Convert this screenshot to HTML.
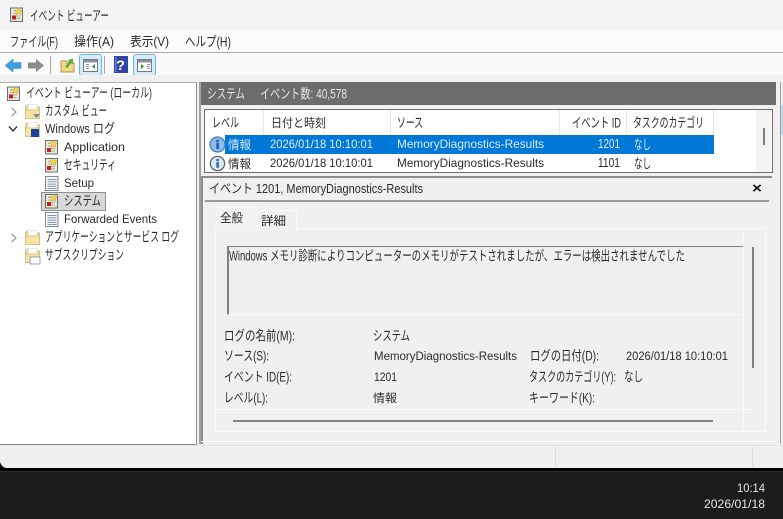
<!DOCTYPE html>
<html><head><meta charset="utf-8"><style>
html,body{margin:0;padding:0;overflow:hidden;width:783px;height:519px}
body{position:relative;background:#f0f0f0;font-family:"Liberation Sans","Noto Sans CJK JP",sans-serif;font-size:12px;color:#222}
.a{position:absolute}
svg{position:absolute}
#txt{left:0;top:0;overflow:hidden}
#txt text{font-family:"Liberation Sans","Noto Sans CJK JP",sans-serif;font-size:12px;fill:#2a2a2a;white-space:pre}
#txt .j{font-size:13.5px;transform:translateY(.5px)}
#txt .m{font-size:13px}
#txt .w{fill:#dcebfa}
#txt .s{font-size:11.5px}
#txt .h{fill:#e8e8e8}
#txt .d{fill:#e6e6e6}
</style></head><body>
<svg width="0" height="0" style="position:absolute"><defs>
<symbol id="log" viewBox="0 0 16 16"><rect x="1.5" y="1.5" width="12" height="13.5" fill="#efe9d4" stroke="#5f6f80"/><path d="M4 4.5h7M4 7h7M4 9.5h7M4 12h7" stroke="#9aa"/><rect x="3" y="9" width="4" height="4" fill="#b22"/><path d="M9.5 1l1.2 2.4 2.6.4-1.9 1.8.5 2.6-2.4-1.2-2.4 1.2.5-2.6-1.9-1.8 2.6-.4z" fill="#f5d44a" stroke="#c9a227" stroke-width=".5"/></symbol>
<symbol id="plain" viewBox="0 0 16 16"><rect x="1.5" y="1.5" width="12.5" height="14" fill="#f6f8fb" stroke="#7a8a9a"/><path d="M3.5 4.5h9M3.5 6.8h9M3.5 9.1h9M3.5 11.4h9M3.5 13.5h9" stroke="#7f95ad"/></symbol>
<symbol id="folder" viewBox="0 0 18 18"><path d="M1.5 4V15.5H15.5V4H8L6.5 2H2.5z" fill="#f0d68a" stroke="#d3bf85"/><rect x="4" y="1.5" width="9" height="6" fill="#fff" stroke="#d8d8d8" stroke-width=".6"/><path d="M1.5 7H15.5V15.5H1.5z" fill="#f7e3a0" stroke="#d8c488"/></symbol>
<symbol id="info" viewBox="0 0 18 18"><circle cx="9" cy="9" r="7.5" fill="#fff" stroke="#5a6570" stroke-width="1.5"/><circle cx="9" cy="9" r="6" fill="#d9e6f5"/><rect x="7.8" y="7.5" width="2.6" height="6" fill="#2a63b0"/><rect x="7.8" y="4.2" width="2.6" height="2.3" fill="#2a63b0"/></symbol>
</defs></svg>

<!-- title -->
<div class="a" style="left:0;top:0;width:783px;height:30px;background:#f3f3f3"></div>
<svg style="left:9px;top:6px" width="16" height="17"><use href="#log" width="16" height="17"/></svg>
<!-- menu -->
<div class="a" style="left:0;top:30px;width:783px;height:22px;background:#fbfbfb;border-bottom:1px solid #a8a8a8"></div>
<!-- toolbar -->
<div class="a" style="left:0;top:53px;width:783px;height:22px;background:#fafafa"></div>
<svg style="left:5px;top:58px" width="17" height="15"><path d="M0 7.5L8 1V4.5H16V10.5H8V14z" fill="#3f9fe0" stroke="#3a8dcc" stroke-width=".5"/></svg>
<svg style="left:28px;top:58px" width="17" height="15"><path d="M16 7.5L8 1V4.5H0V10.5H8V14z" fill="#8c8c8c"/></svg>
<div class="a" style="left:50px;top:56px;width:1px;height:18px;background:#a8a8a8"></div>
<svg style="left:60px;top:57px" width="15" height="16"><path d="M1 4H6L7 6H14V15H1z" fill="#f2d784" stroke="#b09a55"/><path d="M5 10L9 4.5 7 3.5 13 1.5V7L11 6 7.5 11z" fill="#62a83c"/></svg>
<div class="a" style="left:79px;top:54px;width:21px;height:20px;background:#d8ebf8;border:1px solid #6fb3e0;border-radius:3px"></div>
<svg style="left:83px;top:59px" width="15" height="13"><rect x=".5" y=".5" width="14" height="12" fill="#fff" stroke="#777"/><rect x="1" y="1" width="13" height="2.5" fill="#8a94a0"/><path d="M3 5.5h3M3 7.5h3M3 9.5h3" stroke="#89a"/><path d="M12 5L9 7.5 12 10z" fill="#2d8a3a"/></svg>
<div class="a" style="left:104px;top:56px;width:1px;height:18px;background:#a8a8a8"></div>
<svg style="left:114px;top:56px" width="14" height="17"><rect width="14" height="17" fill="#2f46a8"/><rect x="1" y="1" width="1.5" height="15" fill="#6a7ed0"/></svg>
<div class="a" style="left:133px;top:54px;width:21px;height:20px;background:#d8ebf8;border:1px solid #6fb3e0;border-radius:3px"></div>
<svg style="left:137px;top:59px" width="15" height="13"><rect x=".5" y=".5" width="14" height="12" fill="#fff" stroke="#777"/><rect x="1" y="1" width="13" height="2.5" fill="#8a94a0"/><path d="M10 5.5h3M10 7.5h3M10 9.5h3" stroke="#89a"/><path d="M4 5L7 7.5 4 10z" fill="#2d8a3a"/></svg>
<div class="a" style="left:0;top:75px;width:783px;height:7px;background:#f0f0f0"></div>

<!-- tree -->
<div class="a" style="left:0;top:82px;width:196px;height:361px;background:#fff;border-right:1px solid #8d8d8d;border-bottom:1px solid #8d8d8d;border-top:1px solid #b0b0b0"></div>
<svg style="left:6px;top:85px" width="16" height="17"><use href="#log" width="16" height="17"/></svg>
<svg style="left:10px;top:107px" width="8" height="10"><path d="M1.5 1L6 5 1.5 9" fill="none" stroke="#9a9a9a" stroke-width="1.3"/></svg>
<svg style="left:24px;top:103px" width="18" height="18"><use href="#folder" width="18" height="18"/><path d="M9 11h7l-3.5 4z" fill="#7a8a9a"/></svg>
<svg style="left:8px;top:125px" width="10" height="8"><path d="M1 1.5L5 6 9 1.5" fill="none" stroke="#333" stroke-width="1.4"/></svg>
<svg style="left:24px;top:121px" width="18" height="18"><use href="#folder" width="18" height="18"/><rect x="7" y="8" width="8" height="8" fill="#1f3f9e"/></svg>
<svg style="left:44px;top:139px" width="16" height="16"><use href="#log" width="16" height="16"/></svg>
<svg style="left:44px;top:157px" width="16" height="16"><use href="#log" width="16" height="16"/></svg>
<svg style="left:44px;top:175px" width="16" height="16"><use href="#plain" width="16" height="16"/></svg>
<div class="a" style="left:41px;top:192px;width:63px;height:17px;background:#d9d9d9;border:1px solid #8f8f8f"></div>
<svg style="left:44px;top:193px" width="16" height="16"><use href="#log" width="16" height="16"/></svg>
<svg style="left:44px;top:211px" width="16" height="16"><use href="#plain" width="16" height="16"/></svg>
<svg style="left:10px;top:233px" width="8" height="10"><path d="M1.5 1L6 5 1.5 9" fill="none" stroke="#9a9a9a" stroke-width="1.3"/></svg>
<svg style="left:24px;top:229px" width="18" height="18"><use href="#folder" width="18" height="18"/></svg>
<svg style="left:24px;top:247px" width="18" height="18"><use href="#folder" width="18" height="18"/><rect x="6" y="10" width="10" height="7" fill="#fff" stroke="#778" stroke-width=".7"/></svg>

<!-- right frame -->
<div class="a" style="left:199px;top:82px;width:2px;height:362px;background:#a0a0a0"></div>
<div class="a" style="left:201px;top:82px;width:575px;height:23px;background:#6c6c6c"></div>
<div class="a" style="left:780px;top:82px;width:1px;height:362px;background:#a0a0a0"></div>
<div class="a" style="left:781px;top:105px;width:2px;height:30px;background:#c8d8e8"></div>

<!-- list -->
<div class="a" style="left:204px;top:109px;width:567px;height:62px;background:#fff;border:1px solid #6e6e6e"></div>
<div class="a" style="left:756px;top:110px;width:15px;height:62px;background:#f3f3f3"></div>
<div class="a" style="left:763px;top:128px;width:2px;height:17px;background:#808080"></div>
<div class="a" style="left:263px;top:110px;width:1px;height:25px;background:#e8e8e8"></div>
<div class="a" style="left:390px;top:110px;width:1px;height:25px;background:#e8e8e8"></div>
<div class="a" style="left:559px;top:110px;width:1px;height:25px;background:#e8e8e8"></div>
<div class="a" style="left:626px;top:110px;width:1px;height:25px;background:#e8e8e8"></div>
<div class="a" style="left:713px;top:110px;width:1px;height:25px;background:#e8e8e8"></div>
<div class="a" style="left:225px;top:135px;width:489px;height:19px;background:#0078d7"></div>
<svg style="left:209px;top:136px" width="17" height="17"><circle cx="8.5" cy="8.5" r="7.5" fill="#8fbbe8" stroke="#3f7fc0" stroke-width="1.3"/><rect x="7.3" y="7" width="2.6" height="6" fill="#1d5cad"/><rect x="7.3" y="3.8" width="2.6" height="2.3" fill="#1d5cad"/></svg>
<svg style="left:209px;top:155px" width="17" height="17"><use href="#info" width="17" height="17"/></svg>

<!-- detail -->
<div class="a" style="left:203px;top:176px;width:569px;height:2px;background:#8c8c8c"></div>
<div class="a" style="left:201px;top:176px;width:2px;height:268px;background:#8c8c8c"></div>
<div class="a" style="left:205px;top:200px;width:564px;height:2px;background:#9a9a9a"></div>
<div class="a" style="left:215px;top:228px;width:549px;height:202px;border:1px solid #fafafa;background:#f0f0f0"></div>
<div class="a" style="left:257px;top:210px;width:38px;height:19px;background:#f0f0f0;border:1px solid #fafafa;border-bottom:none"></div>
<div class="a" style="left:216px;top:207px;width:41px;height:23px;background:#f2f2f2;border-top:1px solid #fafafa"></div>
<div class="a" style="left:227px;top:246px;width:515px;height:67px;border-top:1px solid #808080;border-left:2px solid #808080;border-bottom:1px solid #fafafa"></div>
<div class="a" style="left:752px;top:247px;width:2px;height:121px;background:#808080"></div>
<div class="a" style="left:216px;top:409px;width:539px;height:1px;background:#fafafa"></div>
<div class="a" style="left:233px;top:420px;width:480px;height:2px;background:#858585"></div>
<div class="a" style="left:743px;top:228px;width:1px;height:202px;background:#fafafa"></div>
<div class="a" style="left:201px;top:441px;width:575px;height:1px;background:#fafafa"></div>

<!-- status -->
<div class="a" style="left:0;top:445px;width:783px;height:23px;background:#f0f0f0;border-top:1px solid #e4e4e4;box-sizing:border-box"></div>
<div class="a" style="left:555px;top:447px;width:1px;height:20px;background:#dcdcdc"></div>
<div class="a" style="left:752px;top:447px;width:1px;height:20px;background:#dcdcdc"></div>
<!-- taskbar -->
<div class="a" style="left:0;top:468px;width:783px;height:3px;background:#000"></div>
<div class="a" style="left:0;top:471px;width:783px;height:1px;background:#2c2c2c"></div>
<div class="a" style="left:0;top:472px;width:783px;height:47px;background:#1c1c1c"></div>
<svg style="left:0;top:462px" width="6" height="6"><path d="M0 0L0 6H6Q1.5 5 0 0z" fill="#111"/></svg>

<svg id="txt" width="783" height="519">
<text class="j" x="30" y="20" textLength="79" lengthAdjust="spacingAndGlyphs">イベント ビューアー</text>
<text class="j" x="10" y="46" textLength="48" lengthAdjust="spacingAndGlyphs">ファイル(F)</text>
<text class="m" x="74" y="46" textLength="40" lengthAdjust="spacingAndGlyphs">操作(A)</text>
<text class="m" x="130" y="46" textLength="39" lengthAdjust="spacingAndGlyphs">表示(V)</text>
<text class="j" x="185" y="46" textLength="46" lengthAdjust="spacingAndGlyphs">ヘルプ(H)</text>
<text x="116" y="70" textLength="9" lengthAdjust="spacingAndGlyphs" style="fill:#fff;font-weight:bold;font-size:14px">?</text>

<text class="j" x="26" y="97" textLength="126" lengthAdjust="spacingAndGlyphs">イベント ビューアー (ローカル)</text>
<text class="j" x="45" y="115" textLength="62" lengthAdjust="spacingAndGlyphs">カスタム ビュー</text>
<text class="m" x="45" y="133" textLength="70" lengthAdjust="spacingAndGlyphs">Windows ログ</text>
<text x="64" y="151" textLength="61" lengthAdjust="spacingAndGlyphs">Application</text>
<text class="j" x="64" y="169" textLength="52" lengthAdjust="spacingAndGlyphs">セキュリティ</text>
<text x="64" y="187" textLength="30" lengthAdjust="spacingAndGlyphs">Setup</text>
<text class="j" x="64" y="205" textLength="37" lengthAdjust="spacingAndGlyphs">システム</text>
<text x="64" y="223" textLength="93" lengthAdjust="spacingAndGlyphs">Forwarded Events</text>
<text class="j" x="45" y="241" textLength="134" lengthAdjust="spacingAndGlyphs">アプリケーションとサービス ログ</text>
<text class="j" x="45" y="259" textLength="79" lengthAdjust="spacingAndGlyphs">サブスクリプション</text>

<text class="j h" x="207" y="98" textLength="38" lengthAdjust="spacingAndGlyphs">システム</text>
<text class="j h" x="260" y="98" textLength="87" lengthAdjust="spacingAndGlyphs">イベント数: 40,578</text>

<text class="j" x="212" y="127" textLength="27" lengthAdjust="spacingAndGlyphs">レベル</text>
<text x="271" y="127" textLength="55" lengthAdjust="spacingAndGlyphs">日付と時刻</text>
<text class="j" x="397" y="127" textLength="26" lengthAdjust="spacingAndGlyphs">ソース</text>
<text class="j" x="572" y="127" textLength="49" lengthAdjust="spacingAndGlyphs">イベント ID</text>
<text class="j" x="633" y="127" textLength="71" lengthAdjust="spacingAndGlyphs">タスクのカテゴリ</text>

<text class="w" x="228" y="149" textLength="23" lengthAdjust="spacingAndGlyphs">情報</text>
<text class="w" x="270" y="148" textLength="103" lengthAdjust="spacingAndGlyphs">2026/01/18 10:10:01</text>
<text class="w" x="397" y="148" textLength="147" lengthAdjust="spacingAndGlyphs">MemoryDiagnostics-Results</text>
<text class="m w" x="598" y="148" textLength="22" lengthAdjust="spacingAndGlyphs">1201</text>
<text class="m w" x="634" y="149" textLength="17" lengthAdjust="spacingAndGlyphs">なし</text>

<text x="228" y="168" textLength="23" lengthAdjust="spacingAndGlyphs">情報</text>
<text x="270" y="167" textLength="103" lengthAdjust="spacingAndGlyphs">2026/01/18 10:10:01</text>
<text x="397" y="167" textLength="147" lengthAdjust="spacingAndGlyphs">MemoryDiagnostics-Results</text>
<text class="m" x="598" y="167" textLength="22" lengthAdjust="spacingAndGlyphs">1101</text>
<text class="m" x="634" y="168" textLength="17" lengthAdjust="spacingAndGlyphs">なし</text>

<text class="m" x="209" y="193" textLength="214" lengthAdjust="spacingAndGlyphs">イベント 1201, MemoryDiagnostics-Results</text>
<text x="752" y="193" textLength="10" lengthAdjust="spacingAndGlyphs" style="font-weight:bold;font-size:15px;fill:#111">×</text>

<text x="220" y="222" textLength="23" lengthAdjust="spacingAndGlyphs">全般</text>
<text x="261" y="225" textLength="25" lengthAdjust="spacingAndGlyphs">詳細</text>

<text class="j" x="229" y="260" textLength="456" lengthAdjust="spacingAndGlyphs">Windows メモリ診断によりコンピューターのメモリがテストされましたが、エラーは検出されませんでした</text>

<text class="j" x="224" y="340" textLength="71" lengthAdjust="spacingAndGlyphs">ログの名前(M):</text>
<text class="j" x="373" y="340" textLength="37" lengthAdjust="spacingAndGlyphs">システム</text>
<text class="j" x="224" y="360" textLength="45" lengthAdjust="spacingAndGlyphs">ソース(S):</text>
<text class="s" x="374" y="360" textLength="143" lengthAdjust="spacingAndGlyphs">MemoryDiagnostics-Results</text>
<text class="j" x="530" y="360" textLength="69" lengthAdjust="spacingAndGlyphs">ログの日付(D):</text>
<text class="s" x="626" y="360" textLength="102" lengthAdjust="spacingAndGlyphs">2026/01/18 10:10:01</text>
<text class="j" x="224" y="381" textLength="68" lengthAdjust="spacingAndGlyphs">イベント ID(E):</text>
<text class="s" x="374" y="381" textLength="23" lengthAdjust="spacingAndGlyphs">1201</text>
<text class="j" x="529" y="381" textLength="87" lengthAdjust="spacingAndGlyphs">タスクのカテゴリ(Y):</text>
<text class="m" x="624" y="381" textLength="19" lengthAdjust="spacingAndGlyphs">なし</text>
<text class="j" x="224" y="402" textLength="44" lengthAdjust="spacingAndGlyphs">レベル(L):</text>
<text class="s" x="373" y="402" textLength="24" lengthAdjust="spacingAndGlyphs">情報</text>
<text class="j" x="529" y="402" textLength="66" lengthAdjust="spacingAndGlyphs">キーワード(K):</text>

<text class="d" x="737" y="492" textLength="28" lengthAdjust="spacingAndGlyphs">10:14</text>
<text class="d" x="704" y="508" textLength="61" lengthAdjust="spacingAndGlyphs">2026/01/18</text>
</svg>
</body></html>
